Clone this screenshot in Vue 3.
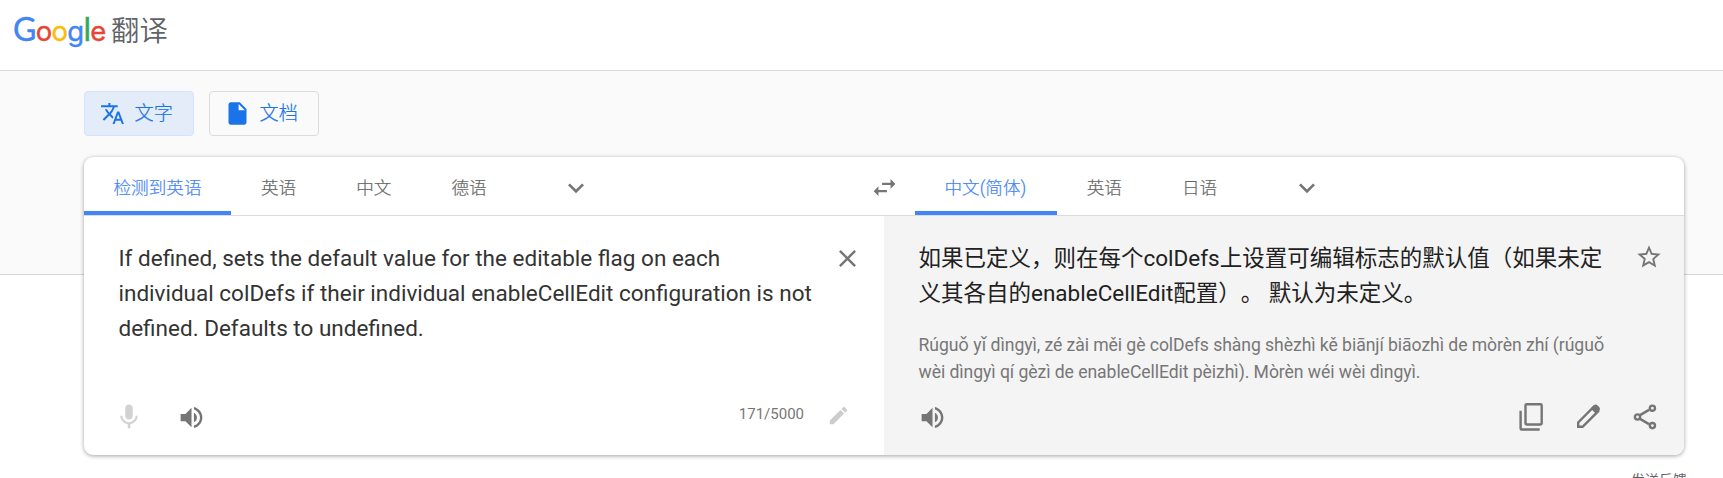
<script setup>
const logo = [
  ['G', 'blue'], ['o', 'red round'], ['o', 'yellow round'], ['g', 'blue round'], ['l', 'green'], ['e', 'red round'],
]
const sourceTabs = ['检测到英语', '英语', '中文', '德语']
const targetTabs = ['中文(简体)', '英语', '日语']
const chevron = 'M7.41 8.59L12 13.17l4.59-4.58L18 10l-6 6-6-6z'
const volume = 'M3 9v6h4l5 5V4L7 9H3zm13.5 3c0-1.77-1.02-3.29-2.5-4.03v8.05c1.48-.73 2.5-2.25 2.5-4.02zM14 3.23v2.06c2.89.86 5 3.54 5 6.71s-2.11 5.85-5 6.71v2.06c4.01-.91 7-4.49 7-8.77s-2.99-7.86-7-8.77z'
</script>

<template>
  <div class="page">
    <header class="header">
      <div class="logo"><span v-for="(l, i) in logo" :key="i" :class="l[1]">{{ l[0] }}</span></div>
      <div class="product">翻译</div>
    </header>

    <main class="band">
      <nav class="modes">
        <button class="mode active">
          <svg class="mode-icon" viewBox="-1 -1 26 26"><path d="M12.87 15.07l-2.54-2.51.03-.03c1.74-1.94 2.98-4.17 3.71-6.53H17V4h-7V2H8v2H1v1.99h11.17C11.5 7.92 10.44 9.75 9 11.35 8.07 10.32 7.3 9.19 6.69 8h-2c.73 1.63 1.73 3.17 2.98 4.56l-5.09 5.02L4 19l5-5 3.11 3.11.76-2.04zM18.5 10h-2L12 22h2l1.12-3h4.75L21 22h2l-4.5-12zm-2.62 7l1.62-4.33L19.12 17h-3.24z" /></svg>
          <span>文字</span>
        </button>
        <button class="mode">
          <svg class="mode-icon" viewBox="0 0 24 24"><path d="M6 2c-1.1 0-1.99.9-1.99 2L4 20c0 1.1.89 2 1.99 2H18c1.1 0 2-.9 2-2V8l-6-6H6zm7 7V3.5L18.5 9H13z" /></svg>
          <span>文档</span>
        </button>
      </nav>

      <section class="card">
        <div class="langs">
          <div class="source-langs">
            <div v-for="(t, i) in sourceTabs" :key="t" class="tab" :class="{ active: i === 0 }">{{ t }}</div>
            <svg class="chevron" viewBox="0 0 24 24"><path :d="chevron" /></svg>
            <svg class="swap" viewBox="0 0 24 24"><path d="M6.99 11L3 15l3.99 4v-3H14v-2H6.99v-3zM21 9l-3.99-4v3H10v2h7.01v3L21 9z" /></svg>
          </div>
          <div class="target-langs">
            <div v-for="(t, i) in targetTabs" :key="t" class="tab" :class="{ active: i === 0 }">{{ t }}</div>
            <svg class="chevron" viewBox="0 0 24 24"><path :d="chevron" /></svg>
          </div>
        </div>

        <div class="panes">
          <div class="pane source">
            <div class="row">
              <div class="text source-text">
                If defined, sets the default value for the editable flag on each<br>
                individual colDefs if their individual enableCellEdit configuration is not<br>
                defined. Defaults to undefined.
              </div>
              <svg class="clear" viewBox="0 0 24 24"><path d="M19 6.41L17.59 5 12 10.59 6.41 5 5 6.41 10.59 12 5 17.59 6.41 19 12 13.41 17.59 19 19 17.59 13.41 12z" /></svg>
            </div>
            <div class="tools">
              <svg class="mic" viewBox="0 0 24 24"><path d="M12 14c1.66 0 2.99-1.34 2.99-3L15 5c0-1.66-1.34-3-3-3S9 3.34 9 5v6c0 1.66 1.34 3 3 3zm5.3-3c0 3-2.54 5.1-5.3 5.1S6.7 14 6.7 11H5c0 3.41 2.72 6.23 6 6.72V21h2v-3.28c3.28-.48 6-3.3 6-6.72h-1.7z" /></svg>
              <svg class="volume" viewBox="0 0 24 24"><path :d="volume" /></svg>
              <span class="count">171/5000</span>
              <svg class="pen" viewBox="0 0 24 24"><path d="M3 17.25V21h3.75L17.81 9.94l-3.75-3.75L3 17.25zM20.71 7.04c.39-.39.39-1.02 0-1.41l-2.34-2.34c-.39-.39-1.02-.39-1.41 0l-1.83 1.83 3.75 3.75 1.83-1.83z" /></svg>
            </div>
          </div>

          <div class="pane target">
            <div class="row">
              <div>
                <div class="text target-text">如果已定义，则在每个colDefs上设置可编辑标志的默认值（如果未定<br>义其各自的enableCellEdit配置）。 默认为未定义。</div>
                <div class="pinyin">Rúguǒ yǐ dìngyì, zé zài měi gè colDefs shàng shèzhì kě biānjí biāozhì de mòrèn zhí (rúguǒ<br>wèi dìngyì qí gèzì de enableCellEdit pèizhì). Mòrèn wéi wèi dìngyì.</div>
              </div>
              <svg class="star" viewBox="0 0 24 24"><path d="M22 9.24l-7.19-.62L12 2 9.19 8.63 2 9.24l5.46 4.73L5.82 21 12 17.27 18.18 21l-1.63-7.03L22 9.24zM12 15.4l-3.76 2.27 1-4.28-3.32-2.88 4.38-.38L12 6.1l1.71 4.04 4.38.38-3.32 2.88 1 4.28L12 15.4z" /></svg>
            </div>
            <div class="tools">
              <svg class="volume" viewBox="0 0 24 24"><path :d="volume" /></svg>
              <svg class="action copy line" viewBox="0 0 32 32"><rect x="10.5" y="3.2" width="16.2" height="20.3" rx="1.2" /><path d="M5.6 9.7V27.5a1 1 0 0 0 1 1H24.7" /></svg>
              <svg class="action line" viewBox="0 0 32 32"><path d="M5.2 25.8V21.4L20.6 6 25 10.4 9.6 25.8Z" /><path class="solid" d="M17.6 7.4L20.7 4.4Q22.6 2.6 24.6 4.4L26.2 6Q28 8 26.2 10L23.2 13Z" /></svg>
              <svg class="action line" viewBox="0 0 32 32"><path d="M10.6 14.4L20 8.9M10.6 17.6L20 23.1" /><circle cx="8.5" cy="16" r="2.6" /><circle cx="23.4" cy="7.2" r="2.6" /><circle cx="23.4" cy="24.6" r="2.6" /></svg>
            </div>
          </div>
        </div>
      </section>
    </main>
    <div class="feedback">发送反馈</div>
  </div>
</template>

<style>
html, body { margin: 0; overflow: hidden; background: #fff; }
</style>

<style scoped>
.page {
  height: 478px;
  overflow: hidden;
  font-family: Roboto, "Noto Sans CJK SC", sans-serif;
}
svg { display: block; flex: none; fill: #757575; }
.header {
  box-sizing: border-box;
  height: 71px;
  padding: 5px 0 0 13px;
  display: flex;
  border-bottom: 1px solid #dcdcdc;
}
.logo {
  width: 98px;
  font: 400 32px/47px Lato, sans-serif;
  letter-spacing: -0.7px;
  white-space: nowrap;
  -webkit-text-stroke: 0.4px currentColor;
}
.round { font-family: Inter, sans-serif; font-size: 27.5px; line-height: 1; }
.blue { color: #4285f4; }
.red { color: #ea4335; }
.yellow { color: #fbbc05; }
.green { color: #34a853; }
.product { color: #5f6368; font-size: 28.4px; line-height: 53px; font-weight: 350; }
.band {
  box-sizing: border-box;
  height: 204px;
  padding: 20px 39px 0 84px;
  background: #fafafa;
  border-bottom: 1px solid #d6d6d6;
}
.modes { display: flex; gap: 15px; }
.mode {
  box-sizing: border-box;
  width: 110px;
  height: 45px;
  padding: 0 0 0 14px;
  display: flex;
  align-items: center;
  gap: 8.5px;
  border: 1px solid #dadce0;
  border-radius: 4px;
  background: transparent;
  color: #1a73e8;
  font-family: inherit;
  font-size: 19.2px;
  font-weight: 300;
  line-height: 24px;
  -webkit-text-stroke: 0.2px currentColor;
}
.mode span { margin-top: 0; white-space: nowrap; }
.mode.active { background: #e4ecf9; border-color: #d2e3fc; }
.mode-icon { width: 27px; height: 27px; fill: #1a73e8; }
.card {
  width: 1600px;
  height: 298px;
  margin-top: 21px;
  border-radius: 9px;
  overflow: hidden;
  background: #fff;
  box-shadow: 0 1px 4px rgba(0, 0, 0, 0.37);
}
.langs { display: flex; height: 58px; border-bottom: 1px solid #dcdcdc; }
.source-langs, .target-langs { display: flex; align-items: center; }
.source-langs { width: 831px; }
.tab {
  box-sizing: border-box;
  height: 58px;
  padding: 0 30px;
  font-size: 17.6px;
  font-weight: 300;
  line-height: 62px;
  color: #666;
  white-space: nowrap;
  border-bottom: 4px solid transparent;
  -webkit-text-stroke: 0.2px currentColor;
}
.tab.active { padding: 0 29.5px; color: #4285f4; border-bottom-color: #4285f4; }
.target-langs .tab.active { padding-right: 30.5px; }
.chevron { width: 32px; height: 32px; margin: 4px 0 0 43.5px; }
.target-langs .chevron { margin-left: 44px; }
.swap { width: 29px; height: 29px; margin: 2px 16px 0 auto; }
.panes { display: flex; height: 239px; }
.pane {
  box-sizing: border-box;
  width: 800px;
  display: flex;
  flex-direction: column;
  justify-content: space-between;
}
.target { background: #f4f4f4; }
.row { display: flex; justify-content: space-between; padding-left: 34.5px; }
.text {
  padding-top: 25px;
  font-size: 22.5px;
  line-height: 35px;
  white-space: nowrap;
  text-spacing-trim: space-all;
}
.source-text { color: #333; }
.target-text { color: #212121; }
.pinyin {
  margin-top: 21px;
  color: #777;
  font-size: 17.6px;
  letter-spacing: -0.065px;
  line-height: 27px;
  white-space: nowrap;
}
.clear { width: 29px; height: 29px; margin: 28px 22.5px 0 0; }
.star { width: 28px; height: 28px; margin: 27px 21px 0 0; }
.tools { display: flex; align-items: center; height: 76px; }
.mic { width: 30px; height: 30px; margin-left: 30px; fill: #d2d2d2; }
.volume { width: 29px; height: 29px; margin: 0 0 0 32.5px; }
.count { margin: -6px 23px 0 auto; color: #777; font-size: 15px; }
.pen { width: 23px; height: 23px; margin: -4px 34px 0 0; fill: #ccc; }
.target .volume { margin: 0 auto 0 33.5px; }
.target .tools { flex: none; height: 74px; margin-top: -20px; padding-bottom: 1px; }
.action { width: 32px; height: 32px; margin: 0 26px 0 0; }
.action:nth-child(3) { margin-right: 24px; }
.action:last-child { margin-right: 23px; }
.line { fill: none; stroke: #757575; stroke-width: 2.4; }
.solid { fill: #757575; stroke: none; }
.feedback {
  margin: 195px 36px 0 0;
  text-align: right;
  color: #5f6368;
  font-size: 14px;
  line-height: 20px;
}
</style>
